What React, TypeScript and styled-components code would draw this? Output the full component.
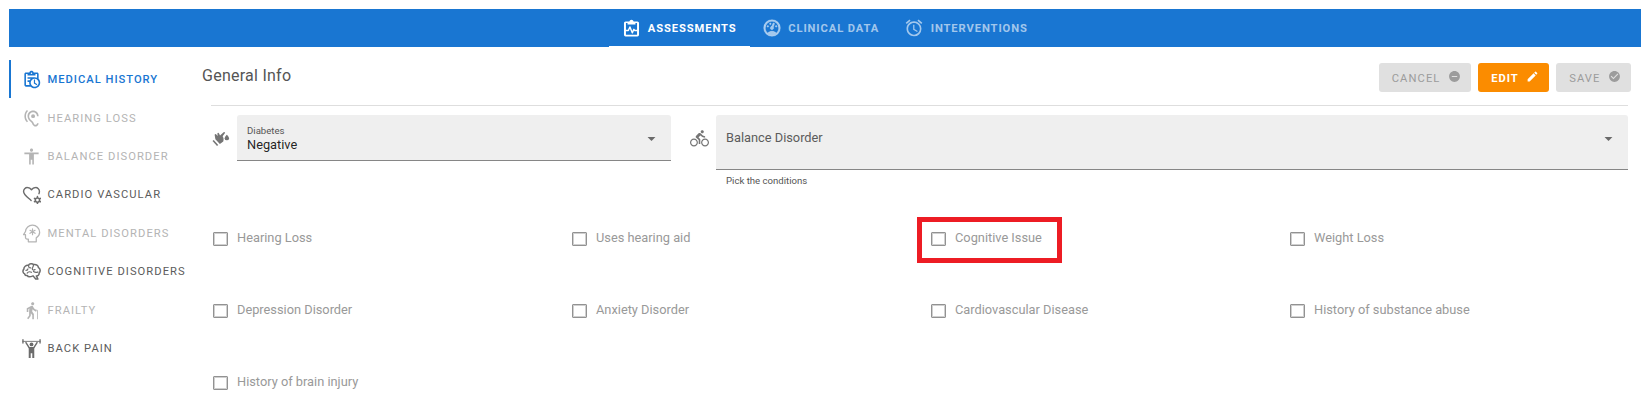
import React from "react";
import styled, { createGlobalStyle, css } from "styled-components";
import {
  MdAccessibility,
  MdAlarm,
  MdArrowDropDown,
  MdCheckCircle,
  MdDirectionsBike,
  MdEdit,
  MdElderly,
  MdHearing,
  MdRemoveCircle,
} from "react-icons/md";

const GlobalStyle = createGlobalStyle`
  * { box-sizing: border-box; }
  body {
    margin: 0;
    background: #fff;
    font-family: Roboto, "Liberation Sans", sans-serif;
    font-size: 12.8px;
    color: rgba(0, 0, 0, 0.87);
  }
`;

const Page = styled.div`
  width: 1647px;
  height: 403px;
  padding: 9px 6px 0 9px;
  overflow: hidden;
`;

const TabBar = styled.nav`
  height: 38px;
  display: flex;
  justify-content: center;
  background: #1976d2;
`;

const Tab = styled.div<{ $active?: boolean; $width: number }>`
  width: ${(p) => p.$width}px;
  display: flex;
  align-items: center;
  justify-content: center;
  gap: 6.5px;
  padding-top: 1px;
  white-space: nowrap;
  color: ${(p) => (p.$active ? "#fff" : "rgba(255, 255, 255, 0.6)")};
  border-bottom: 1px solid ${(p) => (p.$active ? "#fff" : "transparent")};
  font-size: 11.2px;
  font-weight: 700;
  letter-spacing: 0.9px;
`;

const Body = styled.div`
  display: flex;
`;

const Sidebar = styled.aside`
  width: 192px;
  flex: none;
  padding-top: 13px;
`;

const SideItem = styled.div<{ $state: "active" | "normal" | "disabled" }>`
  height: 38.4px;
  display: flex;
  align-items: center;
  gap: 6.5px;
  padding: 1px 0 0 11px;
  white-space: nowrap;
  font-size: 11.2px;
  font-weight: 400;
  letter-spacing: 1.05px;
  border-left: 2px solid transparent;
  color: ${(p) => (p.$state === "disabled" ? "#b4b4b4" : "#5c5c5c")};
  svg {
    color: ${(p) => (p.$state === "normal" ? "#6c6c6c" : "inherit")};
  }
  ${(p) =>
    p.$state === "active" &&
    css`
      font-weight: 500;
      letter-spacing: 0.98px;
      color: #1976d2;
      border-left-color: #1976d2;
    `}
`;

const Main = styled.main`
  flex: 1;
  min-width: 0;
  padding: 16px 10px 0 1px;
`;

const Header = styled.header`
  display: flex;
  justify-content: space-between;
  height: 42px;
`;

const Title = styled.h1`
  margin: 0;
  font-size: 16px;
  font-weight: 400;
  line-height: 25px;
  letter-spacing: 0.25px;
  color: #555;
`;

const Actions = styled.div`
  display: flex;
  gap: 7px;
`;

const Button = styled.button<{ $primary?: boolean; $width: number }>`
  width: ${(p) => p.$width}px;
  height: 29px;
  display: flex;
  align-items: center;
  justify-content: flex-end;
  gap: 7.5px;
  padding: 0 10px 0 0;
  border: 0;
  border-radius: 3px;
  font-family: inherit;
  font-size: 11.2px;
  font-weight: ${(p) => (p.$primary ? 700 : 400)};
  letter-spacing: ${(p) => (p.$primary ? 0.9 : 1.1)}px;
  color: ${(p) => (p.$primary ? "#fff" : "#9c9c9c")};
  background: ${(p) => (p.$primary ? "#fb8c00" : "#e0e0e0")};

  span {
    padding-top: 2px;
  }
  svg {
    margin-bottom: 3px;
  }
`;

const Form = styled.section`
  margin: 0 3px 0 9px;
  padding-top: 9px;
  border-top: 1px solid #dedede;
`;

const Fields = styled.div`
  height: 98px;
  display: flex;
  align-items: flex-start;
`;

const FieldIcon = styled.div<{ $width: number; $left: number }>`
  width: ${(p) => p.$width}px;
  padding: 14px 0 0 ${(p) => p.$left}px;
  flex: none;
  color: #757575;
  svg {
    display: block;
  }
`;

const Field = styled.div<{ $width: number }>`
  width: ${(p) => p.$width}px;
  flex: none;
`;

const Select = styled.div<{ $height: number }>`
  height: ${(p) => p.$height}px;
  display: flex;
  justify-content: space-between;
  padding: 0 10px 0 10px;
  border-radius: 3px 3px 0 0;
  border-bottom: 1px solid #868686;
  background: #efefef;
  svg {
    margin-top: 14px;
    color: #6a6a6a;
  }
`;

const FloatingLabel = styled.div`
  padding-top: 10px;
  font-size: 9.6px;
  line-height: 12px;
  color: #555;
`;

const Value = styled.div`
  line-height: 16px;
`;

const Placeholder = styled.div`
  padding-top: 15px;
  line-height: 16px;
  color: #5c5c5c;
`;

const Hint = styled.div`
  padding: 5px 10px;
  font-size: 9.6px;
  line-height: 11px;
  color: #555;
`;

const Checks = styled.div`
  display: grid;
  grid-template-columns: repeat(4, 359px);
  grid-auto-rows: 72px;
`;

const Check = styled.label`
  position: relative;
  display: flex;
  align-items: flex-start;
  padding: 19px 0 0 2px;
  color: #999;
  line-height: 14px;
  white-space: nowrap;
`;

const Box = styled.span`
  width: 15px;
  height: 14px;
  margin-right: 9px;
  border: 1px solid #929292;
  box-shadow: inset 0 0 0 1px #d0d0d0;
  border-radius: 1px;
`;

const CheckText = styled.span`
  margin-top: -1px;
`;

const Highlight = styled.span`
  position: absolute;
  left: -12px;
  top: 4px;
  width: 145px;
  height: 46px;
  border: 5px solid #ed1c24;
`;

const Icon = ({ size = 19, children }: { size?: number; children: React.ReactNode }) => (
  <svg width={size} height={size} viewBox="0 0 24 24" fill="currentColor">
    {children}
  </svg>
);

const Line = ({ d, w = 2 }: { d: string; w?: number }) => (
  <path d={d} fill="none" stroke="currentColor" strokeWidth={w} strokeLinejoin="round" strokeLinecap="round" />
);

const ClipboardPulse = () => (
  <Icon>
    <path fillRule="evenodd" d="M19.500 3h-4.700a3 3 0 0 0-5.600 0H4.500a2 2 0 0 0-2 2v15a2 2 0 0 0 2 2h15a2 2 0 0 0 2-2V5a2 2 0 0 0-2-2zM5 5h2v2h10V5h2v15H5z" />
    <Line d="M5 14.500h3l2-4.500 3 7.500 2-4.500 1 1.500h3" w={1.800} />
  </Icon>
);

const Gauge = () => (
  <Icon size={20}>
    <path
      stroke="currentColor"
      strokeWidth=".5"
      d="M12 2A10 10 0 0 0 2 12a10 10 0 0 0 10 10 10 10 0 0 0 10-10A10 10 0 0 0 12 2m0 2a8 8 0 0 1 8 8c0 2.400-1 4.500-2.700 6-1.400-1.300-3.300-2-5.300-2s-3.800.7-5.300 2C5 16.500 4 14.400 4 12a8 8 0 0 1 8-8m2 1.890c-.38.01-.74.26-.9.65l-1.290 3.230-.1.23c-.71.13-1.300.6-1.570 1.260-.41 1.030.09 2.190 1.120 2.600s2.190-.09 2.600-1.120c.26-.66.14-1.420-.29-1.980l.1-.26 1.290-3.210.01-.03c.2-.51-.05-1.090-.56-1.300-.13-.05-.26-.07-.41-.07M10 6a1 1 0 0 0-1 1 1 1 0 0 0 1 1 1 1 0 0 0 1-1 1 1 0 0 0-1-1M7 9a1 1 0 0 0-1 1 1 1 0 0 0 1 1 1 1 0 0 0 1-1 1 1 0 0 0-1-1m10 0a1 1 0 0 0-1 1 1 1 0 0 0 1 1 1 1 0 0 0 1-1 1 1 0 0 0-1-1z"
    />
  </Icon>
);

const ClipboardClock = () => (
  <Icon>
    <path d="M21 11.110V5c0-1.110-.89-2-2-2h-4.180C14.400 1.840 13.300 1 12 1s-2.400.84-2.820 2H5c-1.100 0-2 .9-2 2v14c0 1.110.9 2 2 2h6.110c1.260 1.240 2.980 2 4.890 2 3.870 0 7-3.130 7-7 0-1.910-.76-3.630-2-4.890M12 3c.55 0 1 .45 1 1s-.45 1-1 1-1-.45-1-1 .45-1 1-1M5 19V5h2v2h10V5h2v4.680c-.91-.43-1.920-.68-3-.68H7v2h4.100c-.6.57-1.060 1.250-1.420 2H7v2h2.080c-.05.33-.08.66-.08 1 0 1.080.25 2.090.68 3H5m11 2c-2.760 0-5-2.240-5-5s2.240-5 5-5 5 2.240 5 5-2.240 5-5 5m.5-4.750l2.860 1.690-.75 1.220L15 17v-5h1.500z" />
  </Icon>
);

const HeartCog = () => (
  <Icon>
    <Line w={1.800} d="M11.500 19.500C7 15.500 2 12.500 2 8.200A4.800 4.800 0 0 1 7 3.200c2 0 3.700 1 5 2.800 1.300-1.800 3-2.800 5-2.800a4.800 4.800 0 0 1 5 5c0 1-.2 1.900-.6 2.800" />
    <circle cx="19.500" cy="19" r="2.700" fill="none" stroke="currentColor" strokeWidth="1.900" />
    <Line d="M19.500 14.700v.8M19.500 22.500v.8M15.800 16.900l.7.400M22.500 20.700l.7.400M23.200 16.900l-.7.400M16.500 20.700l-.7.400" w={2} />
  </Icon>
);

const HeadOutline = () => (
  <Icon>
    <Line d="M8 22.500v-3.500H6.200a1.800 1.800 0 0 1-1.800-1.800V13.500H2L4.400 9.500A8.800 8.800 0 0 1 13 1.500a9 9 0 0 1 9.300 9c0 3.200-1.800 5.500-4.300 7v5z" w={1.600} />
    <Line d="M13.300 6.200v7.400M10.100 8l6.400 3.800M16.500 8l-6.400 3.800" w={1.500} />
  </Icon>
);

const Brain = () => (
  <Icon>
    <Line
      w={1.900}
      d="M3.500 15C1 14 .5 11 2.300 9 2.300 6 5 3.800 8 4.200 9.500 2 13 1.800 14.800 3.300c3.200-.6 5.600 1 6 3.700 2.600 1.500 2.800 5 .8 7 .2 2.500-1.500 3.800-3.500 3.600l2 3.900h-2.800l-3.300-4C11 18.700 7.500 18.800 6.800 17.200 5 17.200 3.500 16.500 3.500 15z"
    />
    <Line w={1.500} d="M8.500 4.500c-.5 2 .5 3 2.500 3M5 10.500c1.500 0 2.500-.8 2.500-2M14.500 3.500c0 3-1.500 3-1.500 5s2 2 3.500 1M6.500 14c1.500-2 3.500-2 5.500-1M20 12.500c-1.500 1-4 .5-5.500-.5" />
  </Icon>
);

const WeightLifter = () => (
  <Icon>
    <Line d="M1 3h22" w={1.100} />
    <Line d="M1.200 1v4M22.800 1v4" w={1.700} />
    <circle cx="12" cy="6.800" r="2.400" />
    <Line d="M5 4.500l4 6.500h6l4-6.500" w={1.800} />
    <path d="M8.500 10h7v14h-2.500v-6h-2v6H8.500z" />
  </Icon>
);

const HandDrop = () => (
  <Icon size={18}>
    <path d="M3.500 7.500c.6-1.200 2-1 2.500.1l1.500 1.600L7.200 6c.2-1.200 1.700-1.300 2.200 0l1.300 2.600L15.500 4.200c1.100-.9 2.500.4 1.600 1.600L14.200 9.800c1.300 1.800 1.700 4.700.8 6.700L10.500 20 4.500 13.500z" />
    <path d="M2.300 14.500l6 6.800-1.600 1.400-6-6.700z" />
    <path d="M19.800 7.500s2.900 2.800 2.900 4.700a2.900 2.900 0 0 1-5.800 0c0-1.900 2.900-4.700 2.900-4.700z" />
  </Icon>
);

const sideItems: { label: string; state: "active" | "normal" | "disabled"; icon: React.ReactNode }[] = [
  { label: "MEDICAL HISTORY", state: "active", icon: <ClipboardClock /> },
  { label: "HEARING LOSS", state: "disabled", icon: <MdHearing size={19} /> },
  { label: "BALANCE DISORDER", state: "disabled", icon: <MdAccessibility size={19} /> },
  { label: "CARDIO VASCULAR", state: "normal", icon: <HeartCog /> },
  { label: "MENTAL DISORDERS", state: "disabled", icon: <HeadOutline /> },
  { label: "COGNITIVE DISORDERS", state: "normal", icon: <Brain /> },
  { label: "FRAILTY", state: "disabled", icon: <MdElderly size={19} /> },
  { label: "BACK PAIN", state: "normal", icon: <WeightLifter /> },
];

const conditions = [
  "Hearing Loss",
  "Uses hearing aid",
  "Cognitive Issue",
  "Weight Loss",
  "Depression Disorder",
  "Anxiety Disorder",
  "Cardiovascular Disease",
  "History of substance abuse",
  "History of brain injury",
];

export default function App() {
  return (
    <Page>
      <GlobalStyle />
      <TabBar>
        <Tab $active $width={141}>
          <ClipboardPulse />
          ASSESSMENTS
        </Tab>
        <Tab $width={141}>
          <Gauge />
          CLINICAL DATA
        </Tab>
        <Tab $width={150}>
          <MdAlarm size={20} />
          INTERVENTIONS
        </Tab>
      </TabBar>
      <Body>
        <Sidebar>
          {sideItems.map((item) => (
            <SideItem key={item.label} $state={item.state}>
              {item.icon}
              {item.label}
            </SideItem>
          ))}
        </Sidebar>
        <Main>
          <Header>
            <Title>General Info</Title>
            <Actions>
              <Button $width={92}>
                <span>CANCEL</span>
                <MdRemoveCircle size={13} />
              </Button>
              <Button $primary $width={71}>
                <span>EDIT</span>
                <MdEdit size={13} />
              </Button>
              <Button $width={75}>
                <span>SAVE</span>
                <MdCheckCircle size={13} />
              </Button>
            </Actions>
          </Header>
          <Form>
            <Fields>
              <FieldIcon $width={26} $left={1}>
                <HandDrop />
              </FieldIcon>
              <Field $width={434}>
                <Select $height={46}>
                  <div>
                    <FloatingLabel>Diabetes</FloatingLabel>
                    <Value>Negative</Value>
                  </div>
                  <MdArrowDropDown size={19} />
                </Select>
              </Field>
              <FieldIcon $width={45} $left={19}>
                <MdDirectionsBike size={19} />
              </FieldIcon>
              <Field $width={912}>
                <Select $height={55}>
                  <Placeholder>Balance Disorder</Placeholder>
                  <MdArrowDropDown size={19} />
                </Select>
                <Hint>Pick the conditions</Hint>
              </Field>
            </Fields>
            <Checks>
              {conditions.map((name) => (
                <Check key={name}>
                  <Box />
                  <CheckText>{name}</CheckText>
                  {name === "Cognitive Issue" && <Highlight />}
                </Check>
              ))}
            </Checks>
          </Form>
        </Main>
      </Body>
    </Page>
  );
}
